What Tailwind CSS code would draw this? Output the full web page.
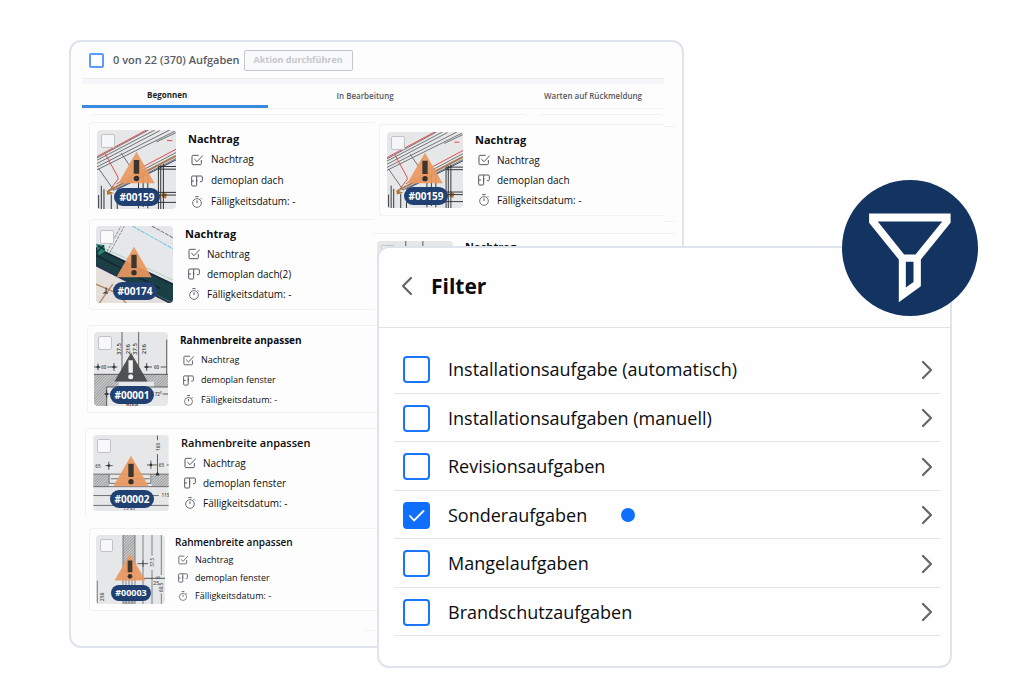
<!doctype html>
<html lang="de">
<head>
  <meta charset="UTF-8" />
  <meta name="viewport" content="width=device-width, initial-scale=1.0" />
  <title>Aufgaben filtern</title>
  <script src="https://cdn.jsdelivr.net/npm/@tailwindcss/browser@4"></script>
</head>
<body class="bg-white min-h-screen font-['Open_Sans','Noto_Sans',sans-serif] text-[#0c0d10]">

  <!-- shared icons and plan drawings -->
  <svg class="absolute size-0" aria-hidden="true">
    <defs>
      <symbol id="i-task" viewBox="0 0 36 36"><path d="M23 4H6Q3 4 3 7v22q0 3 3 3h22q3 0 3-3V18M10 15l8 8L36 4" fill="none" stroke="#555a61" stroke-width="3" /></symbol>
      <symbol id="i-plan" viewBox="0 0 36 36"><path d="M17 3v28q0 2-2 2H5q-3 0-3-3V6q0-3 3-3h26q3 0 3 3v11q0 3-3 3h-4M2 18h7M17 12v8" fill="none" stroke="#555a61" stroke-width="3" /></symbol>
      <symbol id="i-time" viewBox="0 0 36 36"><path d="M13 2h10M18 13v8M29 7l3 3" fill="none" stroke="#555a61" stroke-width="3" /><circle cx="18" cy="21" r="13" fill="none" stroke="#555a61" stroke-width="2.6" /></symbol>
      <symbol id="i-next" viewBox="0 0 12 20"><path d="M2 2l8 8-8 8" fill="none" stroke="#62656a" stroke-width="2.2" stroke-linecap="round" stroke-linejoin="round" /></symbol>
      <pattern id="hatch" width="6" height="6" patternUnits="userSpaceOnUse" patternTransform="rotate(45)"><rect width="6" height="6" fill="#cfd0d1" /><path d="M1 0v6" stroke="#6f7173" stroke-width="2" /></pattern>

      <symbol id="p-roof" viewBox="51 44 238 238">
        <rect x="51" y="44" width="238" height="238" fill="#e6e7e9" />
        <g fill="none" stroke="#55585c" stroke-width="2.5">
          <path d="M51 135L225 44M51 145L240 46M51 155L270 44M51 164L289 46M51 128L206 44" />
          <path d="M56 160l46 66M124 114l45 66M230 80l59 -28" />
          <path d="M110 206L289 112M100 226L289 130" />
        </g>
        <path d="M51 124L200 44M76 116l38 70q3 8-6 14l-20 28M180 160L289 102M262 76h16" fill="none" stroke="#e8474c" stroke-width="3" />
        <path d="M84 228L289 122" stroke="#a97a52" stroke-width="6" />
        <path d="M110 224L289 134" stroke="#35406f" stroke-width="3" />
        <path d="M80 226l22 8-20 6zM248 232l14 4-3 14-12-3z" fill="#b5742f" />
        <path d="M236 154v128M243 150v132M251 146v136M236 154h53M236 162h53M228 232h61M228 240h61M228 262h61M64 212v70M72 222v60M94 238v44M56 240v42M112 264v18M176 180v100M190 176v100M204 180v100" stroke="#303336" stroke-width="3" fill="none" />
      </symbol>

      <symbol id="p-roof2" viewBox="50 33 229 229">
        <rect x="50" y="33" width="229" height="229" fill="#e5e7ea" />
        <path d="M50 128L279 240v22H50z" fill="#e5dfdb" />
        <path d="M50 98L279 206v56L50 150z" fill="#1b4044" />
        <path d="M50 98L279 206M50 120L240 218" stroke="#17253b" stroke-width="5" />
        <path d="M50 150L279 266" stroke="#22324f" stroke-width="6" />
        <path d="M50 88L279 194" stroke="#b9d5bf" stroke-width="3" />
        <path d="M50 206l60 26 30 30M60 262l40-56" stroke="#b08a69" stroke-width="4" fill="none" />
        <path d="M82 110l42-76M90 114l44-80" stroke="#5b6068" stroke-width="2" stroke-dasharray="9 3" />
        <path d="M158 33L279 101" stroke="#6cc5e2" stroke-width="3" stroke-dasharray="12 3" />
        <path d="M216 33l63 35" stroke="#7b7d82" stroke-width="3" stroke-dasharray="12 3" />
        <path d="M50 86l24 4 4 18-20 12z" fill="#2f8276" />
        <path d="M56 92l20 12M52 112l22-22" stroke="#0d3633" stroke-width="4" />
        <path d="M80 216v12l-6 4h12" stroke="#333" stroke-width="3" fill="none" />
      </symbol>

      <symbol id="p-window1" viewBox="44 37 222 222">
        <rect x="44" y="37" width="222" height="222" fill="#e6e7e9" />
        <path d="M44 164h222v38h-42v-16H118v16H82v57H44z" fill="url(#hatch)" />
        <path d="M44 164h222M82 259v-57h184M128 37v127M178 37v127M262 60v104" stroke="#44474a" stroke-width="2.5" fill="none" />
        <path d="M44 142h20M84 142h30M194 142h24M244 142h18M56 132v20M104 130v24M202 130v24M75 223h16M250 223h16M82 212v22" stroke="#37393c" stroke-width="2.5" />
        <path d="M50 142l6-5 6 5-6 5zM98 142l6-5 6 5-6 5zM196 142l6-5 6 5-6 5zM76 223l6-5 6 5-6 5z" fill="#37393c" />
        <g fill="#3c3e42" font-size="18" font-weight="600" font-family="Open Sans">
          <text transform="translate(124 106) rotate(-90)">37.5</text><text transform="translate(151 104) rotate(-90)">216</text>
          <text transform="translate(174 106) rotate(-90)">37.5</text><text transform="translate(200 104) rotate(-90)">216</text>
          <text x="66" y="147" font-size="13">60</text><text x="224" y="147" font-size="13">60</text><text x="140" y="258" font-size="18">Riga</text>
          <text x="226" y="230" font-size="14">72⁵</text>
        </g>
      </symbol>

      <symbol id="p-window2" viewBox="39 30 229 231">
        <rect x="39" y="30" width="229" height="231" fill="#e6e7e9" />
        <path d="M39 149h48v38H39zM216 149h52v38h-52z" fill="url(#hatch)" />
        <path d="M39 149h229M39 187h229M87 149v28h127v-28M92 163h118M39 214h229M39 244h229" stroke="#55585b" stroke-width="2.5" fill="none" />
        <path d="M234 32v14M234 88v62M76 123h22M86 111v25M202 121h30M214 108v25M262 121h6" stroke="#3d3f42" stroke-width="2.5" />
        <circle cx="234" cy="149" r="5" fill="#333" /><circle cx="86" cy="123" r="4" fill="#333" /><circle cx="214" cy="121" r="4" fill="#333" />
        <g fill="#4c4e52" font-size="14" font-weight="600" font-family="Open Sans">
          <text x="45" y="129">65</text><text x="238" y="126">65</text><text transform="translate(241 78) rotate(-90)">160</text>
          <text x="130" y="259">75 95</text><rect x="238" y="202" width="30" height="24" fill="#e6e7e9" /><text x="246" y="219">115</text>
        </g>
      </symbol>

      <symbol id="p-window3" viewBox="108 45 207 207">
        <rect x="108" y="45" width="207" height="207" fill="#e6e7e9" />
        <path d="M189 45h36v90h-36zM189 238h36v14h-36z" fill="url(#hatch)" />
        <path d="M189 45v207M225 45v207M198 140v112M207 140v112M216 140v112M249 45v207M276 45v62M276 150v102M304 45v120M304 220v32M112 182v70" stroke="#6b6d70" stroke-width="2.5" />
        <path d="M232 131h32M249 121v20M220 175h95" stroke="#37393c" stroke-width="2.5" />
        <g fill="#4c4e52" font-size="15" font-weight="600" font-family="Open Sans">
          <text transform="translate(132 244) rotate(-90)">216</text><text transform="translate(283 140) rotate(-90)" font-size="13">37.5</text>
          <text x="280" y="196">25</text><text transform="translate(300 176) rotate(-90)" font-size="13">8</text><text transform="translate(310 216) rotate(-90)" font-size="14">60.5</text>
        </g>
      </symbol>

      <symbol id="warn" viewBox="0 0 108 96">
        <path d="M54 2L107 94H1z" fill="#e9985f" fill-opacity=".93" />
        <path d="M46 26h16v40H46z" fill="#3d3530" /><circle cx="54" cy="80" r="8" fill="#33302e" />
      </symbol>
      <symbol id="warn-dark" viewBox="0 0 108 96">
        <path d="M54 2L107 94H1z" fill="#4b4c4e" fill-opacity=".97" />
        <path d="M46 26h14v40H46z" fill="#f1f1f1" /><circle cx="53" cy="79" r="8" fill="#f1f1f1" />
      </symbol>
    </defs>
  </svg>

  <main class="relative pt-10 pb-4">
    <!-- task board -->
    <section class="ml-[69px] mr-[340px] border-2 border-[#dfe3ec] rounded-xl bg-[#fdfdfe] pb-[15px]">
      <header class="h-9 pl-[18px] flex items-center">
        <input id="all" type="checkbox" class="appearance-none size-[15px] rounded-xs border-2 border-[#5b9bfa] bg-white" />
        <label for="all" class="ml-[9px] text-[11px] font-semibold text-[#595c62]">0 von 22 (370) Aufgaben</label>
        <button class="ml-1 h-[21px] w-[109px] border border-[#c3c6ca] rounded-xs bg-[#f8f9fb] text-[9px] font-bold text-[#c5c8cc] whitespace-nowrap">Aktion durchführen</button>
      </header>
      <div class="ml-[11px] mr-[18px]">
        <div class="h-[6px] bg-[#f4f6f9] border-t border-[#eceef1]"></div>
        <nav class="flex h-[25px] text-[8px] font-semibold text-[#55585e] border-b border-[#f3f4f6]">
          <button class="w-[32%] pr-4 border-b-3 border-[#3a8ade] font-bold text-[#1c1e22]">Begonnen</button>
          <button class="flex-1 pr-[60px]">In Bearbeitung</button>
          <button class="w-[142px]">Warten auf Rückmeldung</button>
        </nav>
        <div class="mt-[5px] ml-[10px] h-2 flex gap-3">
          <div class="flex-1 border-t border-[#eff0f3] rounded-t-sm"></div>
          <div class="w-[124px] border-t border-[#eff0f3] rounded-t-sm"></div>
        </div>
      </div>

      <div class="grid grid-cols-[292px_1fr] items-start pl-[11px] pr-[7px]">
        <div class="flex flex-col">
          <article class="ml-[7px] flex gap-3 border border-r-0 border-b-0 border-[#f0f1f4] rounded-tl-sm pt-[7px] pl-[7px] leading-[21px] text-[10px]">
            <div class="relative size-[79px] shrink-0 rounded overflow-hidden">
              <svg class="size-full"><use href="#p-roof" /></svg>
              <input type="checkbox" aria-label="#00159 auswählen" class="appearance-none absolute top-1 left-1 size-[14px] rounded-xs border border-[#c0c3c9] bg-[#f5f6f8]" />
              <svg class="absolute left-[21px] top-[21px] w-[37px] h-[33px]"><use href="#warn" /></svg>
              <span class="absolute bottom-[3px] left-[17px] w-[46px] h-[18px] leading-[18px] rounded-full bg-[#204072] text-white text-center text-[10px] font-bold">#00159</span>
            </div>
            <div class="-mt-0.5 -mb-1">
              <h3 class="text-[11px] leading-[21px] font-bold">Nachtrag</h3>
              <ul class="pl-[3px]">
                <li class="flex items-center gap-2"><svg class="size-3"><use href="#i-task" /></svg>Nachtrag</li>
                <li class="flex items-center gap-2"><svg class="size-3"><use href="#i-plan" /></svg>demoplan dach</li>
                <li class="flex items-center gap-2"><svg class="size-3"><use href="#i-time" /></svg>Fälligkeitsdatum: -</li>
              </ul>
            </div>
          </article>

          <article class="mt-[10px] ml-[7px] flex gap-3 border border-r-0 border-[#f0f1f4] rounded-l-sm pt-[6px] pb-[6px] pl-[6px] leading-5 text-[10px]">
            <div class="relative size-[77px] shrink-0 rounded overflow-hidden">
              <svg class="size-full"><use href="#p-roof2" /></svg>
              <input type="checkbox" aria-label="#00174 auswählen" class="appearance-none absolute top-1 left-1 size-[14px] rounded-xs border border-[#c0c3c9] bg-[#fafafb]" />
              <svg class="absolute left-5 top-5 w-[36px] h-[32px]"><use href="#warn" /></svg>
              <span class="absolute bottom-[3px] left-[17px] w-[44px] h-[18px] leading-[18px] rounded-full bg-[#204072] text-white text-center text-[10px] font-bold">#00174</span>
            </div>
            <div class="-mt-0.5 -mb-1">
              <h3 class="text-[11px] leading-5 font-bold">Nachtrag</h3>
              <ul class="pl-[3px]">
                <li class="flex items-center gap-[7px]"><svg class="size-3"><use href="#i-task" /></svg>Nachtrag</li>
                <li class="flex items-center gap-[7px]"><svg class="size-3"><use href="#i-plan" /></svg>demoplan dach(2)</li>
                <li class="flex items-center gap-[7px]"><svg class="size-3"><use href="#i-time" /></svg>Fälligkeitsdatum: -</li>
              </ul>
            </div>
          </article>

          <article class="mt-[15px] ml-[5px] -mr-1 flex gap-3 border border-r-0 border-[#f0f1f4] rounded-l-sm pt-[6px] pb-[6px] pl-[6px] leading-5 text-[9px]">
            <div class="relative size-[74px] shrink-0 rounded overflow-hidden">
              <svg class="size-full"><use href="#p-window1" /></svg>
              <input type="checkbox" aria-label="#00001 auswählen" class="appearance-none absolute top-1 left-1 size-[14px] rounded-xs border border-[#c0c3c9] bg-[#f8f8fa]" />
              <svg class="absolute left-5 top-5 w-[34px] h-[30px]"><use href="#warn-dark" /></svg>
              <span class="absolute bottom-[2px] left-4 w-[44px] h-[18px] leading-[18px] rounded-full bg-[#204072] text-white text-center text-[10px] font-bold">#00001</span>
            </div>
            <div class="-mt-0.5 -mb-1">
              <h3 class="text-[10px] leading-5 font-bold">Rahmenbreite anpassen</h3>
              <ul class="pl-[3px]">
                <li class="flex items-center gap-[7px]"><svg class="size-[11px]"><use href="#i-task" /></svg>Nachtrag</li>
                <li class="flex items-center gap-[7px]"><svg class="size-[11px]"><use href="#i-plan" /></svg>demoplan fenster</li>
                <li class="flex items-center gap-[7px]"><svg class="size-[11px]"><use href="#i-time" /></svg>Fälligkeitsdatum: -</li>
              </ul>
            </div>
          </article>

          <article class="mt-[15px] ml-[3px] -mr-1 flex gap-3 border border-r-0 border-b-0 border-[#f0f1f4] rounded-tl-sm pt-[6px] pb-1 pl-[7px] leading-5 text-[10px]">
            <div class="relative size-[76px] shrink-0 rounded overflow-hidden">
              <svg class="size-full"><use href="#p-window2" /></svg>
              <input type="checkbox" aria-label="#00002 auswählen" class="appearance-none absolute top-1 left-1 size-[14px] rounded-xs border border-[#c0c3c9] bg-[#f8f8fa]" />
              <svg class="absolute left-5 top-5 w-[36px] h-[32px]"><use href="#warn" /></svg>
              <span class="absolute bottom-[3px] left-[17px] w-[44px] h-[18px] leading-[18px] rounded-full bg-[#204072] text-white text-center text-[10px] font-bold">#00002</span>
            </div>
            <div class="-mt-0.5 -mb-1">
              <h3 class="text-[11px] leading-5 font-semibold">Rahmenbreite anpassen</h3>
              <ul class="pl-[3px]">
                <li class="flex items-center gap-[7px]"><svg class="size-3"><use href="#i-task" /></svg>Nachtrag</li>
                <li class="flex items-center gap-[7px]"><svg class="size-3"><use href="#i-plan" /></svg>demoplan fenster</li>
                <li class="flex items-center gap-[7px]"><svg class="size-3"><use href="#i-time" /></svg>Fälligkeitsdatum: -</li>
              </ul>
            </div>
          </article>

          <article class="mt-[13px] ml-[7px] -mr-1 flex gap-[10px] border border-r-0 border-[#f0f1f4] rounded-l-sm pt-[6px] pb-[6px] pl-[6px] leading-[18px] text-[9px]">
            <div class="relative size-[69px] shrink-0 rounded overflow-hidden">
              <svg class="size-full"><use href="#p-window3" /></svg>
              <input type="checkbox" aria-label="#00003 auswählen" class="appearance-none absolute top-1 left-1 size-[13px] rounded-xs border border-[#c0c3c9] bg-[#f8f8fa]" />
              <svg class="absolute left-[18px] top-[18px] w-[32px] h-[28px]"><use href="#warn" /></svg>
              <span class="absolute bottom-[3px] left-[15px] w-[40px] h-4 leading-4 rounded-full bg-[#204072] text-white text-center text-[9px] font-bold">#00003</span>
            </div>
            <div class="-mt-0.5 -mb-1">
              <h3 class="text-[10px] leading-[18px] font-semibold">Rahmenbreite anpassen</h3>
              <ul class="pl-[3px]">
                <li class="flex items-center gap-[7px]"><svg class="size-[10px]"><use href="#i-task" /></svg>Nachtrag</li>
                <li class="flex items-center gap-[7px]"><svg class="size-[10px]"><use href="#i-plan" /></svg>demoplan fenster</li>
                <li class="flex items-center gap-[7px]"><svg class="size-[10px]"><use href="#i-time" /></svg>Fälligkeitsdatum: -</li>
              </ul>
            </div>
          </article>
          <div class="mt-[6px] self-end w-[9px] h-[14px] border-b border-[#f0f1f4]"></div>
        </div>

        <div class="relative pt-0.5">
          <div class="absolute right-0 top-1 w-[11px] h-[96px] border-y border-[#f0f1f4]"></div>
          <article class="ml-[5px] mr-[11px] flex gap-3 border border-r-0 border-[#f0f1f4] rounded-l-sm pt-[7px] pb-[7px] pl-[7px] leading-5 text-[10px]">
            <div class="relative size-[76px] shrink-0 rounded overflow-hidden">
              <svg class="size-full"><use href="#p-roof" /></svg>
              <input type="checkbox" aria-label="#00159 auswählen" class="appearance-none absolute top-1 left-1 size-[14px] rounded-xs border border-[#c0c3c9] bg-[#f5f6f8]" />
              <svg class="absolute left-5 top-5 w-[36px] h-[32px]"><use href="#warn" /></svg>
              <span class="absolute bottom-[3px] left-[17px] w-[44px] h-[18px] leading-[18px] rounded-full bg-[#204072] text-white text-center text-[10px] font-bold">#00159</span>
            </div>
            <div class="-mt-0.5 -mb-1">
              <h3 class="text-[11px] leading-5 font-bold">Nachtrag</h3>
              <ul class="pl-[3px]">
                <li class="flex items-center gap-[7px]"><svg class="size-3"><use href="#i-task" /></svg>Nachtrag</li>
                <li class="flex items-center gap-[7px]"><svg class="size-3"><use href="#i-plan" /></svg>demoplan dach</li>
                <li class="flex items-center gap-[7px]"><svg class="size-3"><use href="#i-time" /></svg>Fälligkeitsdatum: -</li>
              </ul>
            </div>
          </article>
          <!-- next card runs on under the filter panel -->
          <article class="mt-[17px] h-10 mr-0 flex gap-3 border-t border-[#f0f1f4] pt-[7px] pl-[3px]">
            <div class="relative size-[76px] shrink-0 rounded overflow-hidden">
              <svg class="size-full"><use href="#p-window1" /></svg>
              <input type="checkbox" aria-label="Nachtrag auswählen" class="appearance-none absolute top-1 left-1 size-[14px] rounded-xs border border-[#c0c3c9] bg-[#f8f8fa]" />
            </div>
            <h3 class="-mt-1 text-[11px] leading-5 font-bold">Nachtrag</h3>
          </article>
        </div>
      </div>
    </section>

    <!-- filter panel -->
    <section class="absolute top-[246px] left-[377px] right-[72px] border-2 border-[#dfe3ec] rounded-xl bg-[#fefefe] pb-[30px]">
      <header class="h-20 pl-[22px] pb-1 flex items-center gap-[18px] border-b border-[#dfe3e8]">
        <button aria-label="Zurück"><svg class="w-3 h-5 rotate-180"><use href="#i-next" /></svg></button>
        <h2 class="text-[21px] font-bold text-[#0b0b0d] leading-7">Filter</h2>
      </header>
      <ul class="mt-[17px] ml-[15px] mr-[10px] h-[291px] grid grid-rows-6 text-[18px] text-[#0c0d0f]">
        <li class="flex items-center border-b border-[#e3e5e8] pt-0.5 pl-[9px] pr-[7px]">
          <input id="f1" type="checkbox" class="appearance-none size-[27px] rounded border-2 border-[#1a75fb] bg-white" />
          <label for="f1" class="ml-[18px]">Installationsaufgabe (automatisch)</label>
          <button aria-label="Öffnen" class="ml-auto"><svg class="w-3 h-5"><use href="#i-next" /></svg></button>
        </li>
        <li class="flex items-center border-b border-[#e3e5e8] pt-0.5 pl-[9px] pr-[7px]">
          <input id="f2" type="checkbox" class="appearance-none size-[27px] rounded border-2 border-[#1a75fb] bg-white" />
          <label for="f2" class="ml-[18px]">Installationsaufgaben (manuell)</label>
          <button aria-label="Öffnen" class="ml-auto"><svg class="w-3 h-5"><use href="#i-next" /></svg></button>
        </li>
        <li class="flex items-center border-b border-[#e3e5e8] pt-0.5 pl-[9px] pr-[7px]">
          <input id="f3" type="checkbox" class="appearance-none size-[27px] rounded border-2 border-[#1a75fb] bg-white" />
          <label for="f3" class="ml-[18px]">Revisionsaufgaben</label>
          <button aria-label="Öffnen" class="ml-auto"><svg class="w-3 h-5"><use href="#i-next" /></svg></button>
        </li>
        <li class="flex items-center border-b border-[#e3e5e8] pt-0.5 pl-[9px] pr-[7px]">
          <span class="relative grid">
            <input id="f4" type="checkbox" checked class="appearance-none size-[27px] rounded border-2 border-[#0f6ffb] checked:bg-[#0f6ffb]" />
            <svg class="absolute inset-0 size-[27px] pointer-events-none" viewBox="0 0 27 27"><path d="M7 14l4 4.500L20.500 9" fill="none" stroke="#fff" stroke-width="1.800" stroke-linecap="round" stroke-linejoin="round" /></svg>
          </span>
          <label for="f4" class="ml-[18px]">Sonderaufgaben</label>
          <span class="ml-[34px] size-[14px] rounded-full bg-[#0f6ffb]"></span>
          <button aria-label="Öffnen" class="ml-auto"><svg class="w-3 h-5"><use href="#i-next" /></svg></button>
        </li>
        <li class="flex items-center border-b border-[#e3e5e8] pt-0.5 pl-[9px] pr-[7px]">
          <input id="f5" type="checkbox" class="appearance-none size-[27px] rounded border-2 border-[#1a75fb] bg-white" />
          <label for="f5" class="ml-[18px]">Mangelaufgaben</label>
          <button aria-label="Öffnen" class="ml-auto"><svg class="w-3 h-5"><use href="#i-next" /></svg></button>
        </li>
        <li class="flex items-center border-b border-[#e3e5e8] pt-0.5 pl-[9px] pr-[7px]">
          <input id="f6" type="checkbox" class="appearance-none size-[27px] rounded border-2 border-[#1a75fb] bg-white" />
          <label for="f6" class="ml-[18px]">Brandschutzaufgaben</label>
          <button aria-label="Öffnen" class="ml-auto"><svg class="w-3 h-5"><use href="#i-next" /></svg></button>
        </li>
      </ul>
    </section>

    <!-- funnel badge -->
    <div class="absolute top-[180px] right-[46px] size-[136px] rounded-full bg-[#133360]">
      <svg class="size-full" viewBox="37 32 407 407"><path d="M118 132H362V160L273 270V350L207 398V270L118 160ZM144 156L223 255H257L337 156ZM228 277V354L251 337V277Z" fill="#fff" fill-rule="evenodd" /></svg>
    </div>
  </main>
</body>
</html>
